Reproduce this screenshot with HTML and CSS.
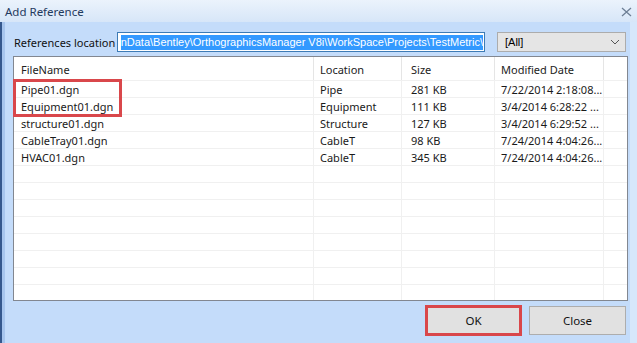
FILE: index.html
```html
<!DOCTYPE html>
<html lang="en">
<head>
  <meta charset="UTF-8" />
  <title>Add Reference</title>
  <link rel="stylesheet" href="styles.css">
</head>
<body>
  <div class="window">
    <div class="titlebar">
      <span class="title">Add Reference</span>
      <svg class="close-x" width="11" height="10" viewBox="0 0 11 10">
        <path d="M1 1 L10 9 M10 1 L1 9" stroke="#6d7f95" stroke-width="1.3" fill="none" />
      </svg>
    </div>

    <div class="frame">
      <div class="content">
        <!-- location row -->
        <div class="loc-row">
          <label class="loc-label">References location</label>
          <div class="loc-input">
            <span class="selected">nData\Bentley\OrthographicsManager V8i\WorkSpace\Projects\TestMetric\</span>
          </div>
          <div class="combo">
            <span>[All]</span>
            <svg width="10" height="6" viewBox="0 0 10 6">
              <polyline points="1,1 5,5 9,1" stroke="#555" stroke-width="1" fill="none" />
            </svg>
          </div>
        </div>

        <!-- file list -->
        <div class="list">
          <div class="row head">
            <div class="cell">FileName</div>
            <div class="cell">Location</div>
            <div class="cell size">Size</div>
            <div class="cell">Modified Date</div>
            <div class="cell"></div>
          </div>
          <div class="row">
            <div class="cell">Pipe01.dgn</div>
            <div class="cell">Pipe</div>
            <div class="cell size">281 KB</div>
            <div class="cell">7/22/2014 2:18:08...</div>
            <div class="cell"></div>
          </div>
          <div class="row">
            <div class="cell">Equipment01.dgn</div>
            <div class="cell">Equipment</div>
            <div class="cell size">111 KB</div>
            <div class="cell">3/4/2014 6:28:22 ...</div>
            <div class="cell"></div>
          </div>
          <div class="row">
            <div class="cell">structure01.dgn</div>
            <div class="cell">Structure</div>
            <div class="cell size">127 KB</div>
            <div class="cell">3/4/2014 6:29:52 ...</div>
            <div class="cell"></div>
          </div>
          <div class="row">
            <div class="cell">CableTray01.dgn</div>
            <div class="cell">CableT</div>
            <div class="cell size">98 KB</div>
            <div class="cell">7/24/2014 4:04:26...</div>
            <div class="cell"></div>
          </div>
          <div class="row">
            <div class="cell">HVAC01.dgn</div>
            <div class="cell">CableT</div>
            <div class="cell size">345 KB</div>
            <div class="cell">7/24/2014 4:04:26...</div>
            <div class="cell"></div>
          </div>
          <div class="row"><div class="cell"></div><div class="cell"></div><div class="cell"></div><div class="cell"></div><div class="cell"></div></div>
          <div class="row"><div class="cell"></div><div class="cell"></div><div class="cell"></div><div class="cell"></div><div class="cell"></div></div>
          <div class="row"><div class="cell"></div><div class="cell"></div><div class="cell"></div><div class="cell"></div><div class="cell"></div></div>
          <div class="row"><div class="cell"></div><div class="cell"></div><div class="cell"></div><div class="cell"></div><div class="cell"></div></div>
          <div class="row"><div class="cell"></div><div class="cell"></div><div class="cell"></div><div class="cell"></div><div class="cell"></div></div>
          <div class="row"><div class="cell"></div><div class="cell"></div><div class="cell"></div><div class="cell"></div><div class="cell"></div></div>
          <div class="row"><div class="cell"></div><div class="cell"></div><div class="cell"></div><div class="cell"></div><div class="cell"></div></div>
          <div class="row filler"><div class="cell"></div><div class="cell"></div><div class="cell"></div><div class="cell"></div><div class="cell"></div></div>

          <!-- red annotation box -->
          <div class="mark-rows"></div>
        </div>

        <!-- buttons -->
        <div class="buttons">
          <button class="btn marked">OK</button>
          <button class="btn">Close</button>
        </div>
      </div>
      <div class="edge"></div>
    </div>
  </div>
</body>
</html>
```

FILE: styles.css
```css
html, body { margin: 0; padding: 0; }
body { width: 637px; height: 343px; overflow: hidden; font-family: "Noto Sans", sans-serif; font-size: 11px; color: #000; }

.window { height: 343px; display: flex; flex-direction: column; background: #c4dcfa; }

.titlebar { height: 22px; flex: none; display: flex; align-items: center; justify-content: space-between; padding: 0 5px 0 5px; background: linear-gradient(#ebf3fc, #d7e6f8); }
.title { color: #1f3a5e; font-size: 11.5px; }
.close-x { margin-top: 1px; }

.frame { flex: 1; display: flex; }
.content { flex: 1; display: flex; flex-direction: column; padding: 10px 2px 0 11px; border-left: 2px solid #35588d; box-shadow: inset 3px 0 0 #a7c5ed; }
.edge { width: 7px; background: #d6e7fb; }

.loc-row { display: flex; align-items: center; height: 20px; padding-left: 1px; }
.loc-label { width: 103px; color: #111; white-space: nowrap; }
.loc-input { width: 368px; height: 20px; box-sizing: border-box; border: 1px solid #3d7bb5; background: #fff; display: flex; align-items: center; justify-content: flex-end; overflow: hidden; padding: 0 1px; }
.selected { background: #3399ff; color: #fff; white-space: nowrap; font-family: "Liberation Sans", sans-serif; font-size: 11px; line-height: 15px; }
.combo { margin-left: 12px; width: 129px; height: 20px; box-sizing: border-box; border: 1px solid #acacac; background: #e5e5e5; display: flex; align-items: center; justify-content: space-between; padding: 0 5px 0 7px; font-family: "Liberation Sans", sans-serif; font-size: 11px; }

.list { position: relative; margin-top: 4px; height: 245px; box-sizing: border-box; border: 1px solid #828790; background: #fff; display: flex; flex-direction: column; }
.row { display: grid; grid-template-columns: 300px 88px 93px 109px 1fr; height: 17px; box-sizing: border-box; border-bottom: 1px solid #f0f0f0; flex: none; }
.row.head { height: 24px; }
.row.filler { flex: 1; border-bottom: none; }
.cell { border-right: 1px solid #f0f0f0; padding: 1px 0 0 6px; line-height: 16px; white-space: nowrap; overflow: hidden; color: #1a1a1a; }
.cell:first-child { padding-left: 7px; }
.cell:last-child { border-right: none; }
.cell.size { padding-left: 9px; }
.head .cell { padding-top: 1px; line-height: 24px; border-right-color: #e5e5e5; color: #222; }
.head .cell:last-child { border-right: none; }

.mark-rows { position: absolute; left: -1px; top: 22px; width: 109px; height: 38px; box-sizing: border-box; border: 3px solid #d9474b; }

.buttons { display: flex; justify-content: flex-end; align-items: center; gap: 7px; margin-top: 4px; height: 31px; padding-right: 2px; }
.btn { font-family: "Noto Sans", sans-serif; font-size: 11.5px; color: #111; width: 97px; height: 29px; border: 1px solid #adadad; background: #e1e1e1; padding: 0; }
.btn.marked { height: 31px; border: 3px solid #d9474b; }
```
